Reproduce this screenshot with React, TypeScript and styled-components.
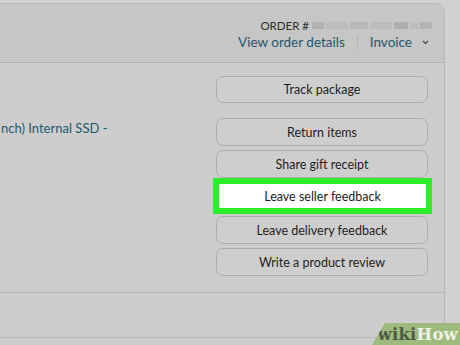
import React from "react";
import styled, { createGlobalStyle } from "styled-components";

const GlobalStyle = createGlobalStyle`
    body {
        margin: 0;
        background: #d1d1d1;
        font-family: Lato, "Noto Sans", "Liberation Sans", sans-serif;
        overflow: hidden;
    }
`;

const Page = styled.div`
    position: relative;
    width: 460px;
    height: 345px;
    overflow: hidden;
    padding-top: 3px;
    box-sizing: border-box;
`;

const Card = styled.div`
    margin: 0 15px 0 -2px;
    border: 1px solid #b9b9b9;
    border-radius: 0 9px 0 0;
    background: #cdcdcd;
    height: 360px;
`;

const Header = styled.div`
    height: 59px;
    background: #c6c6c6;
    border-bottom: 1px solid #b2b2b2;
    border-radius: 0 8px 0 0;
    display: flex;
    flex-direction: column;
    align-items: flex-end;
    padding: 14px 12px 0 0;
    box-sizing: border-box;
`;

const OrderLine = styled.div`
    display: flex;
    align-items: center;
    gap: 3px;
    font-size: 11.5px;
    color: #2f2f2f;
    line-height: 15px;
`;

const Blur = styled.div`
    display: flex;
    gap: 2px;
`;

const BlurBlock = styled.span<{ $w: number; $shade: string }>`
    width: ${(p) => p.$w}px;
    height: 7px;
    background: ${(p) => p.$shade};
`;

const LinkRow = styled.div`
    display: flex;
    align-items: center;
    font-size: 13.5px;
    color: #27566a;
    line-height: 18px;
`;

const Divider = styled.span`
    width: 1px;
    height: 13px;
    background: #b3b3b3;
    margin: 0 12px;
`;

const Chevron = styled.svg`
    margin-left: 10px;
    margin-right: 3px;
`;

const Body = styled.div`
    display: flex;
    justify-content: space-between;
    padding: 13px 16px 16px 2px;
    border-bottom: 1px solid #b5b5b5;
`;

const Title = styled.div`
    font-size: 13px;
    color: #24596b;
    margin-top: 43px;
    line-height: 18px;
`;

const Actions = styled.div`
    width: 212px;
    display: flex;
    flex-direction: column;
    gap: 4px;
`;

const ActionButton = styled.div<{ $first?: boolean; $highlight?: boolean }>`
    height: ${(p) => (p.$first ? 27 : 28)}px;
    box-sizing: border-box;
    border: 1px solid #adadad;
    border-radius: 7px;
    background: #cecece;
    color: #1e1e1e;
    font-size: 12.5px;
    display: flex;
    align-items: center;
    justify-content: center;
    margin-bottom: ${(p) => (p.$first ? 11 : 0)}px;

    ${(p) =>
        p.$highlight &&
        `
        height: 36px;
        margin: -4px -4px -2px -3px;
        border: 6px solid #2bee2b;
        border-radius: 0;
        background: #ffffff;
    `}
`;

const Footer = styled.div`
    height: 44px;
    border-bottom: 1px solid #b9b9b9;
`;

const Watermark = styled.div`
    position: absolute;
    right: 0;
    bottom: 0;
    width: 88px;
    height: 22px;
    background: #9dbb7d;
    clip-path: polygon(13px 0, 100% 0, 100% 100%, 0 100%);
    display: flex;
    align-items: center;
    justify-content: flex-end;
    padding-right: 2px;
    box-sizing: border-box;
    font-family: "DejaVu Serif", "Liberation Serif", serif;
    font-weight: bold;
    font-size: 16.5px;
    letter-spacing: 0.2px;
`;

const Wiki = styled.span`
    color: #4e5a48;
`;

const How = styled.span`
    color: #eef2ea;
`;

const blocks = [
    { w: 12, s: "#b2b2b2" },
    { w: 22, s: "#bdbdbd" },
    { w: 18, s: "#b7b7b7" },
    { w: 22, s: "#bcbcbc" },
    { w: 14, s: "#afafaf" },
    { w: 8, s: "#bdbdbd" },
    { w: 12, s: "#b3b3b3" },
];

const actions = [
    "Track package",
    "Return items",
    "Share gift receipt",
    "Leave seller feedback",
    "Leave delivery feedback",
    "Write a product review",
];

function App() {
    return (
        <>
            <GlobalStyle />
            <Page>
                <Card>
                    <Header>
                        <OrderLine>
                            ORDER #
                            <Blur>
                                {blocks.map((b, i) => (
                                    <BlurBlock key={i} $w={b.w} $shade={b.s} />
                                ))}
                            </Blur>
                        </OrderLine>
                        <LinkRow>
                            View order details
                            <Divider />
                            Invoice
                            <Chevron width="7" height="5" viewBox="0 0 7 5">
                                <path d="M1 1l2.5 2.5L6 1" fill="none" stroke="#444" strokeWidth="1.2" />
                            </Chevron>
                        </LinkRow>
                    </Header>
                    <Body>
                        <Title>nch) Internal SSD -</Title>
                        <Actions>
                            {actions.map((a, i) => (
                                <ActionButton key={a} $first={i === 0} $highlight={i === 3}>
                                    {a}
                                </ActionButton>
                            ))}
                        </Actions>
                    </Body>
                    <Footer />
                </Card>
                <Watermark>
                    <Wiki>wiki</Wiki>
                    <How>How</How>
                </Watermark>
            </Page>
        </>
    );
}

export default App;
